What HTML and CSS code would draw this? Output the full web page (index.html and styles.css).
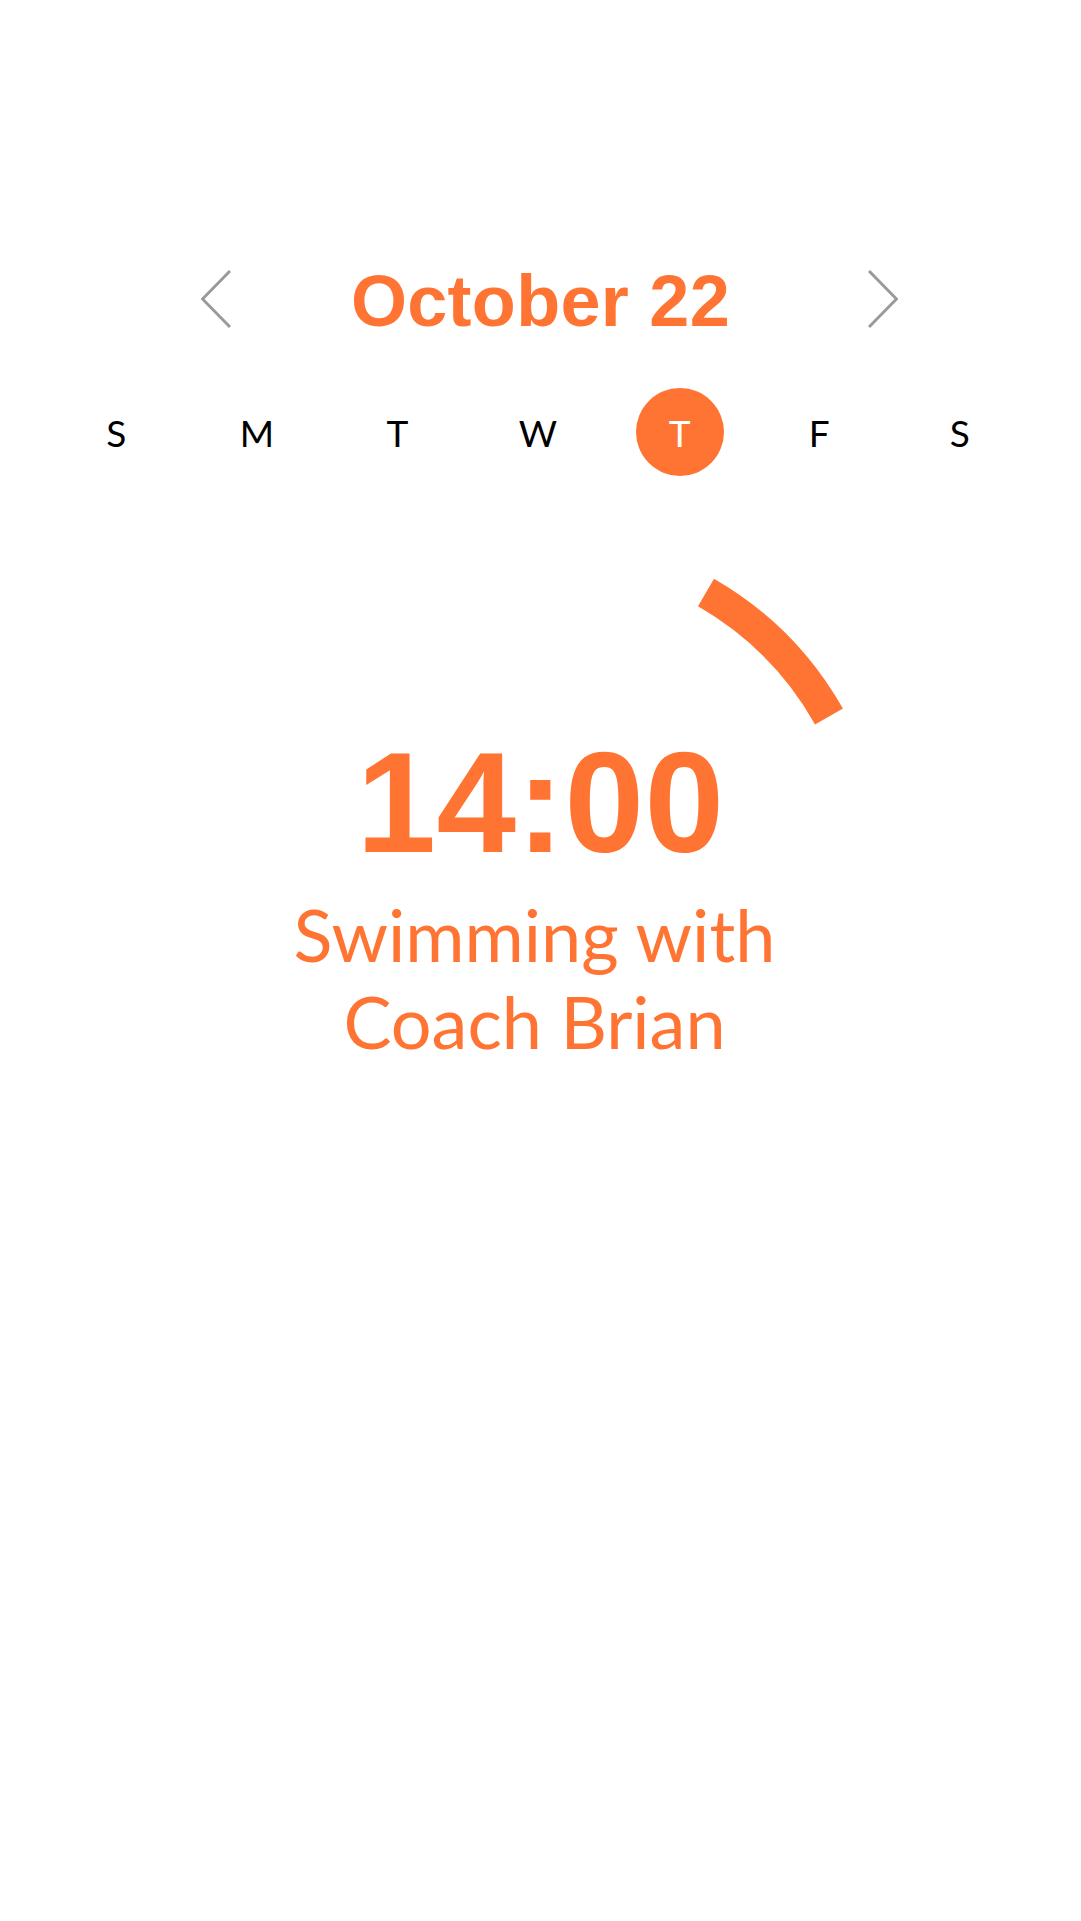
FILE: index.html
```html
<!DOCTYPE html>
<html lang="en">
<head>
<meta charset="utf-8">
<title>October 22</title>
<link rel="stylesheet" href="styles.css">
</head>
<body>
<main class="screen">
  <header class="date-nav">
    <button class="nav-btn nav-prev" aria-label="Previous day">
      <svg class="chevron" width="30" height="58" viewBox="0 0 30 58"><polyline points="29,1 1.5,29 29,57"/></svg>
    </button>
    <h1 class="date-title">October 22</h1>
    <button class="nav-btn nav-next" aria-label="Next day">
      <svg class="chevron" width="30" height="58" viewBox="0 0 30 58"><polyline points="1,1 28.5,29 1,57"/></svg>
    </button>
  </header>

  <div class="week">
    <span class="day">S</span>
    <span class="day">M</span>
    <span class="day">T</span>
    <span class="day">W</span>
    <span class="day is-selected"><span class="day-dot">T</span></span>
    <span class="day">F</span>
    <span class="day">S</span>
  </div>

  <section class="event">
    <svg class="arc" width="180" height="180" viewBox="0 0 180 180"><path d="M 26 32.5 A 332 332 0 0 1 149 156.5"/></svg>
    <div class="event-time">14:00</div>
    <div class="event-title">Swimming with<br>Coach Brian</div>
  </section>
</main>
</body>
</html>
```

FILE: styles.css
```css
html, body {
  margin: 0;
  padding: 0;
  background: #ffffff;
}

body {
  font-family: Lato, "Noto Sans", sans-serif;
  color: #000;
}

.screen {
  width: 1081px;
  min-height: 1921px;
  padding-top: 265px;
  box-sizing: border-box;
}

.date-nav {
  display: grid;
  grid-template-columns: 1fr auto 1fr;
  align-items: start;
  height: 72px;
}

.nav-btn {
  border: 0;
  background: none;
  padding: 0;
  margin-top: 5px;
  line-height: 0;
}

.nav-prev {
  justify-self: start;
  margin-left: 201px;
}

.nav-next {
  justify-self: end;
  margin-right: 183px;
}

.chevron polyline {
  fill: none;
  stroke: #9a9a9a;
  stroke-width: 3;
}

.date-title {
  margin: 0;
  font-family: "Liberation Sans", Arial, sans-serif;
  font-weight: bold;
  font-size: 72px;
  line-height: 72px;
  letter-spacing: 0.3px;
  color: #ff7433;
}

.week {
  display: grid;
  grid-template-columns: repeat(7, 1fr);
  margin-top: 50px;
  padding: 0 51px 0 46px;
  height: 88px;
}

.day {
  display: flex;
  align-items: center;
  justify-content: center;
  font-size: 37px;
  line-height: 88px;
  padding-top: 2px;
  color: #000;
}

.day.is-selected {
  padding-top: 0;
}

.day-dot {
  display: flex;
  align-items: center;
  justify-content: center;
  width: 88px;
  height: 88px;
  border-radius: 50%;
  background: #ff7433;
  color: #fff;
  padding-top: 2px;
  box-sizing: border-box;
  margin-left: 2px;
}

.event {
  position: relative;
  margin-top: 256px;
  text-align: center;
  color: #ff7433;
}

.arc {
  position: absolute;
  left: 680px;
  top: -171px;
  pointer-events: none;
}

.arc path {
  fill: none;
  stroke: #ff7433;
  stroke-width: 32;
}

.event-time {
  font-family: "Liberation Sans", Arial, sans-serif;
  font-weight: bold;
  font-size: 143px;
  line-height: 143px;
  letter-spacing: 0.5px;
}

.event-title {
  margin-top: 17px;
  font-size: 72px;
  line-height: 87px;
  padding-right: 12px;
}
```
